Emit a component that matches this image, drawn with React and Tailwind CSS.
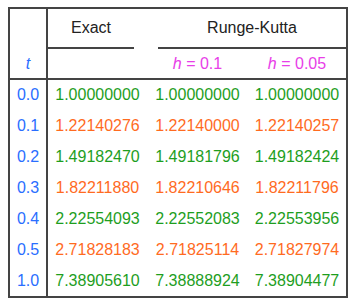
const rows = [
	{ t: '0.0', v: ['1.00000000', '1.00000000', '1.00000000'], c: 'g' },
	{ t: '0.1', v: ['1.22140276', '1.22140000', '1.22140257'], c: 'o' },
	{ t: '0.2', v: ['1.49182470', '1.49181796', '1.49182424'], c: 'g' },
	{ t: '0.3', v: ['1.82211880', '1.82210646', '1.82211796'], c: 'o' },
	{ t: '0.4', v: ['2.22554093', '2.22552083', '2.22553956'], c: 'g' },
	{ t: '0.5', v: ['2.71828183', '2.71825114', '2.71827974'], c: 'o' },
	{ t: '1.0', v: ['7.38905610', '7.38888924', '7.38904477'], c: 'g' },
];

const App = () => {
	return (
		<div
			className="w-[353px] h-[302px] bg-white pl-[8px] pt-[7px] text-[16px]"
			style={{ fontFamily: '"Liberation Sans", Arial, sans-serif' }}
		>
			<div className="w-[340px] h-[291px] border-2 border-[#444] flex flex-col">
				{/* header */}
				<div className="h-[71px] border-b-2 border-[#444] flex">
					<div className="w-[38px] border-r-2 border-[#444] flex flex-col justify-end">
						<div className="h-[29px] flex items-center justify-center italic text-[#2a6eff] leading-none">
							t
						</div>
					</div>
					<div className="flex-1 flex flex-col">
						<div className="h-[40px] flex">
							<div className="w-[86px] border-b-2 border-[#444] flex items-center justify-center text-[#222] leading-none">
								Exact
							</div>
							<div className="w-[24px]" />
							<div className="flex-1 border-b-2 border-[#444] flex items-center justify-center text-[#222] leading-none">
								Runge-Kutta
							</div>
						</div>
						<div className="h-[29px] flex text-[#e83ee8] leading-none">
							<div className="w-[99px]" />
							<div className="w-[101px] flex items-center justify-center">
								<span className="italic">h</span>&nbsp;= 0.1
							</div>
							<div className="flex-1 flex items-center justify-center">
								<span className="italic">h</span>&nbsp;= 0.05
							</div>
						</div>
					</div>
				</div>
				{/* data */}
				{rows.map((r) => (
					<div key={r.t} className="flex-1 flex leading-none">
						<div className="w-[38px] border-r-2 border-[#444] flex items-center justify-center text-[#2a6eff]">
							{r.t}
						</div>
						<div
							className={
								r.c === 'g'
									? 'flex-1 flex text-[#1e9e1e]'
									: 'flex-1 flex text-[#ff6b1f]'
							}
						>
							<div className="w-[99px] flex items-center justify-center">{r.v[0]}</div>
							<div className="w-[101px] flex items-center justify-center">{r.v[1]}</div>
							<div className="flex-1 flex items-center justify-center">{r.v[2]}</div>
						</div>
					</div>
				))}
			</div>
		</div>
	);
};

export default App;
